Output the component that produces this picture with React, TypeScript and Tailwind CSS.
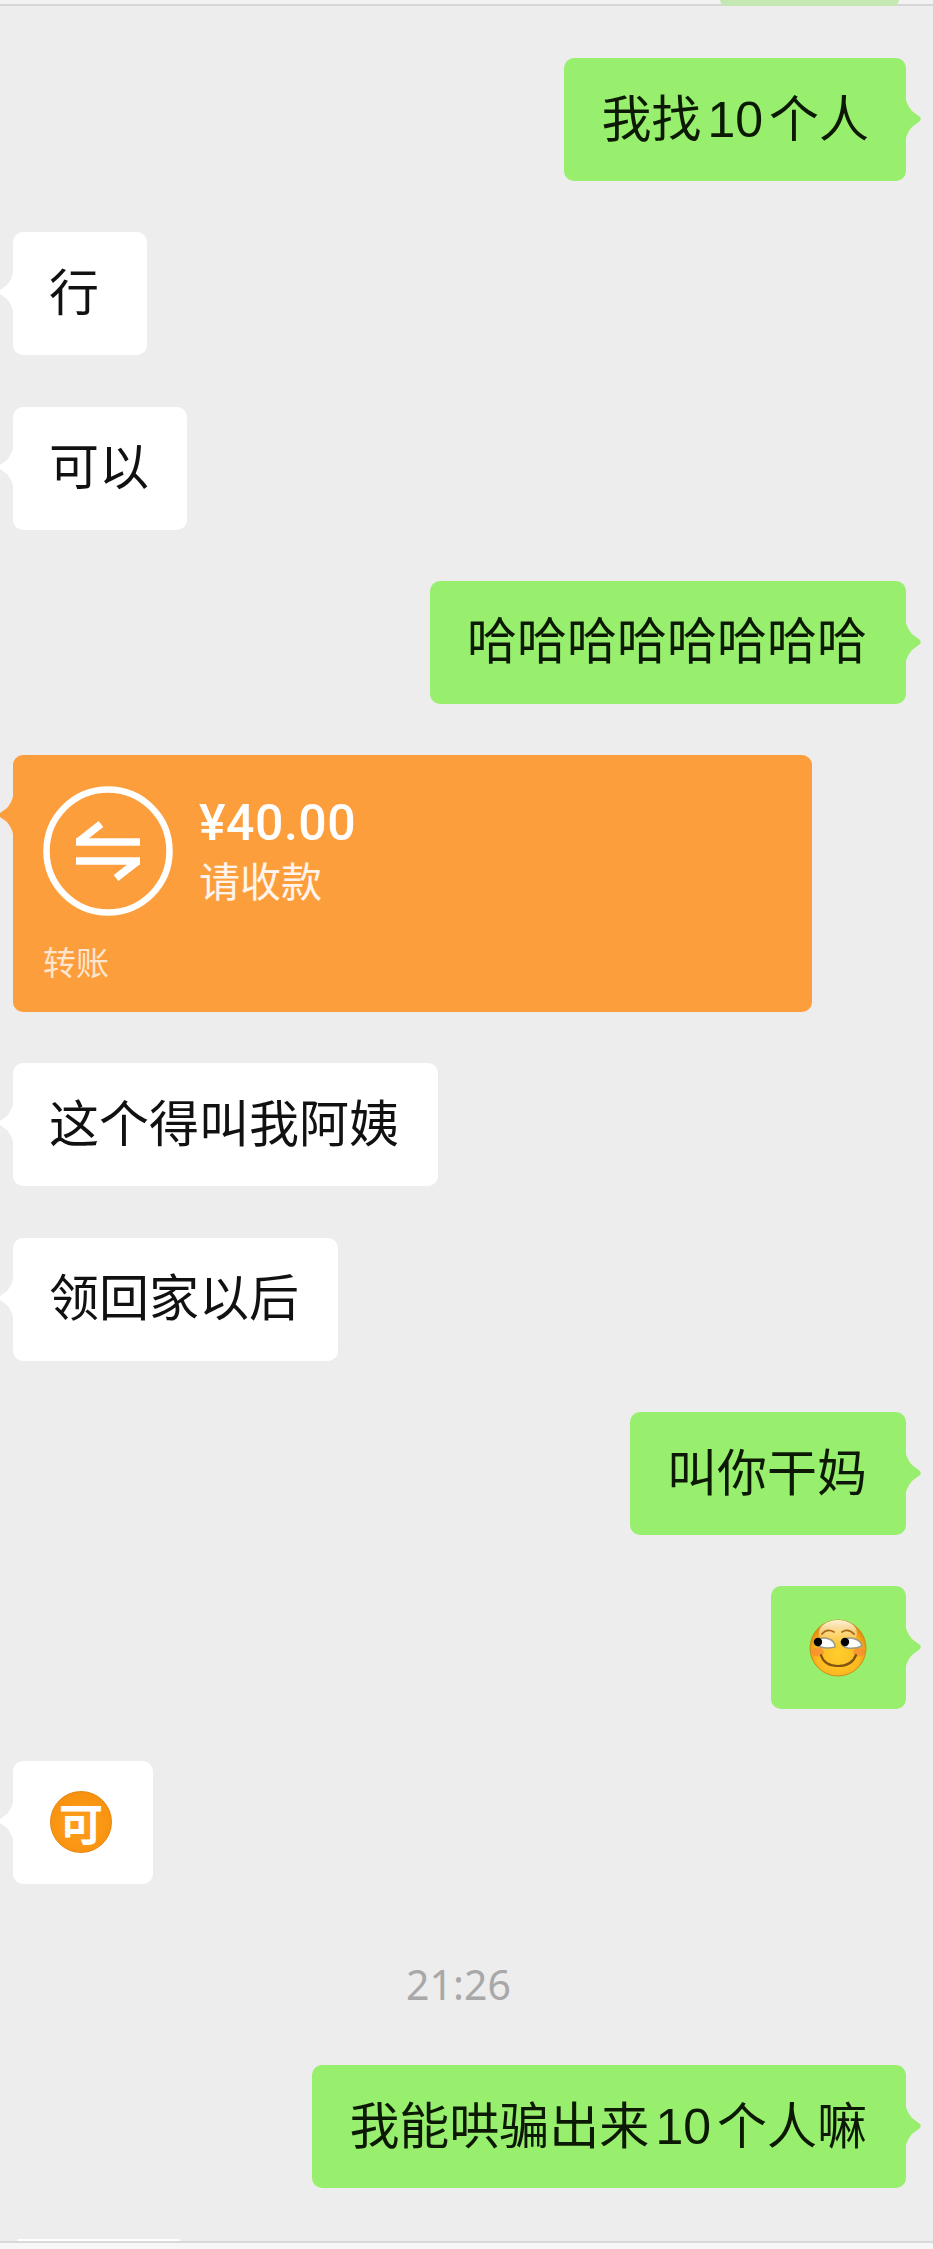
import React from "react";

const fontStack = '"Liberation Sans","Noto Sans CJK SC",sans-serif';

function TailRight() {
  return (
    <svg className="absolute left-full top-[42px] h-[38px] w-[16px]" viewBox="0 0 16 38">
      <path d="M0 0 C1 4 3 7 6 11 L14 17 Q15.5 19 14 21 L6 27 C3 31 1 34 0 38 Z" fill="#98ee6d" />
    </svg>
  );
}

function TailLeft({ color }: { color: string }) {
  return (
    <svg className="absolute right-full top-[41px] h-[38px] w-[14px]" viewBox="0 0 14 38">
      <path d="M14 0 C13 5 11 8 8 12 L1 17 Q-0.5 19 1 21 L8 26 C11 30 13 33 14 38 Z" fill={color} />
    </svg>
  );
}

function Green({ children, className = "" }: { children: React.ReactNode; className?: string }) {
  return (
    <div className="flex justify-end pr-[27px]">
      <div className={`relative flex h-[123px] items-center rounded-[10px] bg-[#98ee6d] text-[#0c1a05] ${className}`}>
        {children}
        <TailRight />
      </div>
    </div>
  );
}

function White({ children, className = "" }: { children: React.ReactNode; className?: string }) {
  return (
    <div className="flex justify-start pl-[13px]">
      <div className={`relative flex h-[123px] items-center rounded-[10px] bg-white text-[#111111] ${className}`}>
        <TailLeft color="#ffffff" />
        {children}
      </div>
    </div>
  );
}

function SmirkEmoji() {
  return (
    <svg width="58" height="58" viewBox="0 0 58 58">
      <defs>
        <radialGradient id="face" cx="50%" cy="60%" r="55%">
          <stop offset="0%" stopColor="#ffcf2e" />
          <stop offset="72%" stopColor="#fdb81f" />
          <stop offset="100%" stopColor="#e48d10" />
        </radialGradient>
        <linearGradient id="shine" x1="0" y1="0" x2="0" y2="1">
          <stop offset="0%" stopColor="#fff6d8" />
          <stop offset="100%" stopColor="#fff6d8" stopOpacity="0" />
        </linearGradient>
      </defs>
      <circle cx="29" cy="29" r="28" fill="url(#face)" stroke="#cf8a1a" strokeWidth="1" />
      <ellipse cx="29" cy="14" rx="19" ry="13" fill="url(#shine)" />
      <ellipse cx="9" cy="33" rx="6" ry="4.5" fill="#f5803a" opacity="0.6" />
      <ellipse cx="50" cy="33" rx="6" ry="4.5" fill="#f5803a" opacity="0.6" />
      <path d="M13 15 Q18 9 25 13" fill="none" stroke="#a86c14" strokeWidth="1.8" strokeLinecap="round" />
      <path d="M33 13 Q39 9 45 15" fill="none" stroke="#a86c14" strokeWidth="1.8" strokeLinecap="round" />
      <path d="M5 23 Q12 17 20 20 Q26 22 26 28 Q18 30 12 28 Q7 27 5 23 Z" fill="#ffffff" stroke="#9a9a88" strokeWidth="1.6" />
      <path d="M32 23 Q38 17 46 20 Q52 22 53 27 Q46 30 39 29 Q33 28 32 23 Z" fill="#ffffff" stroke="#9a9a88" strokeWidth="1.6" />
      <circle cx="9" cy="23" r="4.2" fill="#000000" />
      <circle cx="36" cy="23" r="4.2" fill="#000000" />
      <path d="M12 36 Q15 47 29 47 Q43 47 47 36" fill="none" stroke="#7f5210" strokeWidth="2.2" strokeLinecap="round" />
    </svg>
  );
}

function TransferIcon() {
  return (
    <svg width="130" height="130" viewBox="0 0 130 130" className="shrink-0">
      <circle cx="65" cy="65" r="61.5" fill="none" stroke="#ffffff" strokeWidth="6.5" />
      <path d="M33 56 H97 M35 56 L58 38" fill="none" stroke="#ffffff" strokeWidth="7.5" strokeLinecap="butt" strokeLinejoin="round" />
      <path d="M33 75 H97 M95 75 L73 92" fill="none" stroke="#ffffff" strokeWidth="7.5" strokeLinecap="butt" strokeLinejoin="round" />
    </svg>
  );
}

export default function App() {
  return (
    <div className="flex h-[2249px] w-[933px] flex-col overflow-hidden bg-[#ededed]" style={{ fontFamily: fontStack }}>
      <div className="relative h-[6px] shrink-0 border-b-2 border-[#d6d6d6] bg-[#f2f2f2]">
        <div className="absolute right-[34px] top-0 h-[6px] w-[179px] rounded-b-[8px] bg-[#c4e8b2]" />
      </div>

      <main className="flex flex-1 flex-col gap-[51.3px] pt-[52px] text-[50px] leading-none">
        <Green className="pl-[37px] pr-[37px]">
          <span>我找<span className="mx-[6px]">10</span>个人</span>
        </Green>

        <White className="pl-[36px] pr-[48px]">
          <span>行</span>
        </White>

        <White className="pl-[36px] pr-[38px]">
          <span>可以</span>
        </White>

        <Green className="pl-[37px] pr-[39px]">
          <span>哈哈哈哈哈哈哈哈</span>
        </Green>

        <div className="flex justify-start pl-[13px]">
          <div className="relative flex h-[257px] w-[799px] flex-col rounded-[10px] bg-[#fd9e3d] pl-[30px] pt-[31px] text-white">
            <TailLeft color="#fd9e3d" />
            <div className="flex gap-[26px]">
              <TransferIcon />
              <div className="flex flex-col pt-[8px]">
                <span className="text-[50px] font-medium leading-[58px] tracking-[0.5px]" style={{ fontFamily: 'Roboto,sans-serif' }}>¥40.00</span>
                <span className="mt-[3px] text-[41px] leading-[48px] text-white/90" style={{ fontFamily: '"Noto Sans CJK SC",sans-serif' }}>请收款</span>
              </div>
            </div>
            <span className="mt-[25px] text-[33px] leading-[40px] text-white/75" style={{ fontFamily: '"Noto Sans CJK SC",sans-serif' }}>转账</span>
          </div>
        </div>

        <White className="pl-[36px] pr-[39px]">
          <span>这个得叫我阿姨</span>
        </White>

        <White className="pl-[36px] pr-[39px]">
          <span>领回家以后</span>
        </White>

        <Green className="pl-[37px] pr-[39px]">
          <span>叫你干妈</span>
        </Green>

        <Green className="pl-[38px] pr-[39px]">
          <SmirkEmoji />
        </Green>

        <White className="pl-[37px] pr-[41px]">
          <div className="flex h-[62px] w-[62px] items-center justify-center rounded-full border border-[#e8850f] bg-[radial-gradient(circle_at_50%_55%,#ff9f1f_0%,#f8930f_70%,#e98608_100%)] text-[44px] font-semibold leading-none text-white">
            <span style={{ fontFamily: '"Noto Sans CJK SC",sans-serif' }}>可</span>
          </div>
        </White>

        <div className="flex h-[79px] flex-col items-center pt-[25px]">
          <span className="ml-[-16px] text-[41px] leading-[48px] text-[#a8a8a8]" style={{ fontFamily: '"Noto Sans",sans-serif' }}>21:26</span>
        </div>

        <Green className="pl-[37px] pr-[39px]">
          <span>我能哄骗出来<span className="mx-[6px]">10</span>个人嘛</span>
        </Green>
      </main>

      <div className="relative h-[8px] shrink-0 border-t-2 border-[#d9d9d9] bg-[#f7f7f7]">
        <div className="absolute left-[17px] top-[-4px] h-[2px] w-[163px] rounded-t-[4px] bg-white" />
      </div>
    </div>
  );
}
